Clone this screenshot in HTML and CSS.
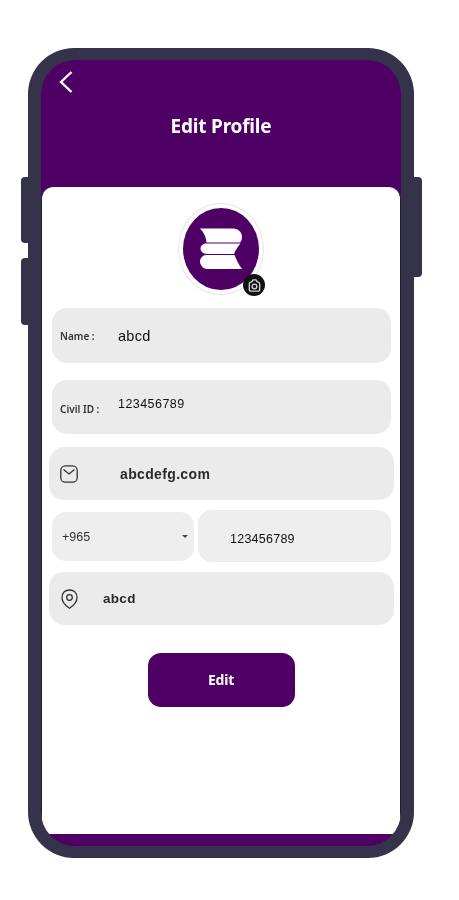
FILE: index.html
```html
<!DOCTYPE html>
<html lang="en">
<head>
<meta charset="utf-8">
<title>Edit Profile</title>
<link rel="stylesheet" href="styles.css">
</head>
<body>
<div class="phone">
  <span class="side side-left-a"></span>
  <span class="side side-left-b"></span>
  <span class="side side-right"></span>
  <div class="screen">
    <header class="header">
      <svg class="back" viewBox="0 0 16 24" width="16" height="24"><path d="M13.500 2 3 12l10.500 10" fill="none" stroke="#fff" stroke-width="2.400"/></svg>
      <h1 class="title">Edit Profile</h1>
    </header>
    <main class="card">
      <div class="avatar">
        <div class="avatar-circle">
          <svg class="logo" viewBox="0 0 42 42" width="42" height="42">
            <path d="M0 0.500H33C38 0.500 42 4 42 9C42 11 41.500 13 40 14.500H6.500C6 9 4 4.500 0 0.500Z" fill="#fff"/>
            <path d="M6.500 15.500H40.500C38 18.500 35.500 22 34 26H7C3 26 0.500 23 0.500 20.500C0.500 17.500 3.500 15.500 6.500 15.500Z" fill="#fff"/>
            <path d="M6 27H34.500C36.500 31.500 38.500 36.500 42 41H7C3 41 0 36.500 0 33.500C0 30 3 27 6 27Z" fill="#fff"/>
          </svg>
        </div>
        <span class="camera">
          <svg viewBox="0 0 16 16" width="15" height="15"><path d="M5.200 4 6.500 2h3l1.300 2 1.700 0.700A1.500 1.500 0 0 1 13.500 6v6.500A1.500 1.500 0 0 1 12 14H4a1.500 1.500 0 0 1-1.500-1.500V6a1.500 1.500 0 0 1 1-1.300Z" fill="none" stroke="#cfcfcf" stroke-width="1.500"/><circle cx="8" cy="9" r="2.500" fill="none" stroke="#cfcfcf" stroke-width="1.500"/></svg>
        </span>
      </div>
      <div class="field field-name">
        <span class="label">Name :</span>
        <span class="value">abcd</span>
      </div>
      <div class="field field-civil">
        <span class="label label-civil">Civil ID :</span>
        <span class="value value-civil">123456789</span>
      </div>
      <div class="field field-wide field-email">
        <svg class="icon" viewBox="0 0 18 18" width="18" height="18"><rect x="0.800" y="0.800" width="16.400" height="16.400" rx="4.500" fill="none" stroke="#333" stroke-width="1.300"/><path d="M3.500 4.500 9 9l5.500-4.500" fill="none" stroke="#333" stroke-width="1.300"/></svg>
        <span class="value value-email">abcdefg.com</span>
      </div>
      <div class="phone-row">
        <div class="code">
          <span class="code-text">+965</span>
          <span class="caret"></span>
        </div>
        <div class="number">123456789</div>
      </div>
      <div class="field field-wide field-loc">
        <svg class="icon-pin" viewBox="0 0 17 20" width="17" height="20"><path d="M8.500 19.300C5 17 1 13.500 1 8.500C1 4 4 1 8.500 1C13 1 16 4 16 8.500C16 13.500 12 17 8.500 19.300Z" fill="none" stroke="#333" stroke-width="1.300"/><circle cx="8.500" cy="8.500" r="2.800" fill="none" stroke="#333" stroke-width="1.300"/></svg>
        <span class="value value-loc">abcd</span>
      </div>
      <button class="edit" type="button">Edit</button>
    </main>
  </div>
</div>
</body>
</html>
```

FILE: styles.css
```css
html, body {
  margin: 0;
  padding: 0;
  height: 900px;
  overflow: hidden;
  background: #fff;
}

.phone {
  position: relative;
  box-sizing: border-box;
  width: 386px;
  height: 810px;
  margin: 48px 0 0 28px;
  padding: 12px 13px;
  border-radius: 46px;
  background: #35334a;
  filter: blur(0.5px);
}

.side {
  position: absolute;
  background: #35334a;
}

.side-left-a { left: -7px; top: 129px; width: 8px; height: 66px; border-radius: 4px 0 0 4px; }
.side-left-b { left: -7px; top: 210px; width: 8px; height: 67px; border-radius: 4px 0 0 4px; }
.side-right { right: -8px; top: 129px; width: 9px; height: 100px; border-radius: 0 4px 4px 0; }

.screen {
  display: flex;
  flex-direction: column;
  height: 786px;
  overflow: hidden;
  border-radius: 34px;
  background: #4f0065;
}

.header {
  display: flex;
  flex-direction: column;
  flex: none;
  height: 127px;
  box-sizing: border-box;
  padding-top: 10px;
}

.back {
  display: block;
  margin-left: 17px;
}

.title {
  margin: 20px 0 0;
  font: 700 19px/24px "Noto Sans", sans-serif;
  letter-spacing: -0.2px;
  color: #fff;
  text-align: center;
}

.card {
  display: flex;
  flex-direction: column;
  flex: none;
  box-sizing: border-box;
  height: 647px;
  padding-top: 16px;
  background: #fff;
  border-left: 1px solid #1f1e2c;
  border-right: 1px solid #1f1e2c;
  border-radius: 12px 12px 0 0;
  font-family: "Liberation Sans", sans-serif;
  color: #111;
}

.avatar {
  position: relative;
  box-sizing: border-box;
  flex: none;
  align-self: center;
  width: 86px;
  height: 92px;
  padding: 4px;
  border: 1px solid #e6e6e6;
  border-radius: 50%;
}

.avatar-circle {
  display: flex;
  align-items: center;
  justify-content: center;
  height: 100%;
  border-radius: 50%;
  background: #4f0065;
}

.logo { display: block; }

.camera {
  position: absolute;
  right: -2px;
  bottom: -2px;
  display: flex;
  align-items: center;
  justify-content: center;
  width: 22px;
  height: 22px;
  border-radius: 50%;
  background: #111;
}

.field {
  display: flex;
  align-items: center;
  flex: none;
  box-sizing: border-box;
  border-radius: 15px;
  background: #ebebeb;
}

.field-name {
  height: 55px;
  margin: 13px 9px 0 10px;
  padding-left: 8px;
}

.field-civil {
  height: 54px;
  margin: 17px 9px 0 10px;
  padding-left: 8px;
}

.field-wide { margin: 0 6px 0 7px; }

.field-email {
  height: 53px;
  margin-top: 13px;
  padding-left: 11px;
}

.field-loc {
  height: 53px;
  margin-top: 10px;
  padding-left: 12px;
}

.label {
  width: 58px;
  flex: none;
  font: 600 10px "Noto Sans", sans-serif;
  color: #333;
}

.label-civil { padding-top: 3px; }

.value {
  font-size: 14.500px;
  line-height: 18px;
  letter-spacing: 0.3px;
}

.value-civil {
  padding-bottom: 6px;
  font-size: 12.500px;
  letter-spacing: 0.45px;
}

.value-email {
  margin-left: 42px;
  font-weight: 700;
  font-size: 14px;
  letter-spacing: 0.35px;
  color: #2a2a2a;
}

.value-loc {
  margin-left: 25px;
  font-weight: 700;
  font-size: 13.500px;
  letter-spacing: 0.3px;
  color: #2a2a2a;
}

.icon, .icon-pin { display: block; flex: none; }

.phone-row {
  display: flex;
  align-items: center;
  gap: 4px;
  flex: none;
  height: 52px;
  margin: 10px 9px 0 10px;
}

.code {
  display: flex;
  align-items: center;
  justify-content: space-between;
  box-sizing: border-box;
  flex: none;
  width: 142px;
  height: 49px;
  padding: 0 6px 0 10px;
  border-radius: 14px;
  background: #eeeeee;
}

.code-text {
  padding-top: 1px;
  font-size: 12.500px;
  color: #333;
}

.caret {
  width: 0;
  height: 0;
  border-left: 3.500px solid transparent;
  border-right: 3.500px solid transparent;
  border-top: 3.500px solid #444;
}

.number {
  display: flex;
  align-items: center;
  flex: 1;
  box-sizing: border-box;
  height: 52px;
  padding: 6px 0 0 32px;
  border-radius: 14px;
  background: #eeeeee;
  font-size: 12.500px;
  letter-spacing: 0.25px;
}

.edit {
  flex: none;
  align-self: center;
  width: 147px;
  height: 54px;
  margin-top: 28px;
  padding: 0 0 2px;
  border: 0;
  border-radius: 13px;
  background: #4f0065;
  color: #fff;
  font: 700 14px "Noto Sans", sans-serif;
  letter-spacing: -0.2px;
}
```
